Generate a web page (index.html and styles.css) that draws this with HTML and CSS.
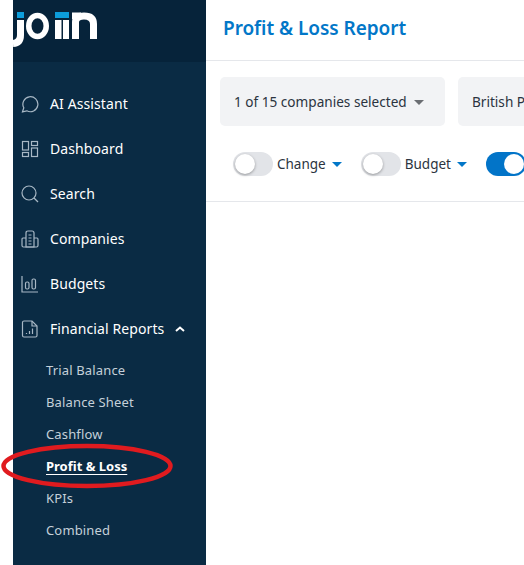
FILE: index.html
```html
<!DOCTYPE html>
<html lang="en">
<head>
    <meta charset="UTF-8">
    <meta name="viewport" content="width=device-width, initial-scale=1.0">
    <title>Profit &amp; Loss Report</title>
    <link rel="stylesheet" href="styles.css">
</head>
<body>
    <div class="side">
        <div class="logo">
            <svg class="logosvg" width="97" height="62" viewBox="0 0 97 62">
                <rect x="4" y="12" width="7" height="6" fill="#0c9ddb"/>
                <rect x="42" y="12" width="14" height="6" fill="#0c9ddb"/>
                <path d="M7.5 20V35Q7.500 43 0 43.500" fill="none" stroke="#fff" stroke-width="7"/>
                <ellipse cx="24.500" cy="26" rx="8.750" ry="10.500" fill="none" stroke="#fff" stroke-width="5.500"/>
                <rect x="42" y="20" width="6.500" height="19" fill="#fff"/>
                <rect x="50" y="20" width="6" height="19" fill="#fff"/>
                <path d="M62.500 39V22Q62.500 16 71 16Q80.500 16 80.500 24V39" fill="none" stroke="#fff" stroke-width="7"/>
                <path d="M59 12.500H68V19H59Z" fill="#fff"/>
            </svg>
        </div>
        <ul class="nav">
            <li class="navitem">
                <svg class="icon" viewBox="0 0 18 18"><path d="M1.500 16.800L2.800 12.800A7.500 7.500 0 1 1 5.800 15.800Z"/></svg>
                <span>AI Assistant</span>
            </li>
            <li class="navitem">
                <svg class="icon" viewBox="0 0 18 18"><rect x="1.500" y="1.500" width="6" height="8.500"/><rect x="10.500" y="1.500" width="6" height="4"/><rect x="1.500" y="12.500" width="6" height="4"/><rect x="10.500" y="8" width="6" height="8.500"/></svg>
                <span>Dashboard</span>
            </li>
            <li class="navitem">
                <svg class="icon" viewBox="0 0 18 18"><circle cx="8" cy="8" r="7"/><path d="M13 13L17 17"/></svg>
                <span>Search</span>
            </li>
            <li class="navitem">
                <svg class="icon" viewBox="0 0 18 18"><path d="M5 17V3Q5 1 7 1H11Q13 1 13 3V17Z"/><path d="M5 8H2Q1 8 1 9.500V15.500Q1 17 2.500 17H15.500Q17 17 17 15.500V9.500Q17 8 16 8H13"/><path d="M7.500 5H10.500M7.500 8H10.500M7.500 11H10.500M7.500 14H10.500"/></svg>
                <span>Companies</span>
            </li>
            <li class="navitem">
                <svg class="icon" viewBox="0 0 18 18"><path d="M1 1V17H17"/><rect x="4.500" y="7" width="3.500" height="7" rx="1.500"/><rect x="11" y="4" width="3.500" height="10" rx="1.500"/></svg>
                <span>Budgets</span>
            </li>
            <li class="navitem">
                <svg class="icon" viewBox="0 0 18 18"><path d="M3 1H11L16 6V15.500Q16 17 14.500 17H3Q1.500 17 1.500 15.500V2.500Q1.500 1 3 1Z"/><path d="M11 1V6H16"/><path d="M5.500 14V13M8.500 14V11M11.500 14V8.500"/></svg>
                <span>Financial Reports</span>
                <svg class="chev" width="10" height="6" viewBox="0 0 10 6"><path d="M1 5L5 1.500L9 5"/></svg>
            </li>
        </ul>
        <ul class="subnav">
            <li>Trial Balance</li>
            <li>Balance Sheet</li>
            <li>Cashflow</li>
            <li class="current">Profit &amp; Loss</li>
            <li>KPIs</li>
            <li>Combined</li>
        </ul>
    </div>

    <div class="main">
        <div class="head">
            <h1>Profit &amp; Loss Report</h1>
        </div>
        <div class="filters">
            <div class="selects">
                <div class="select first">1 of 15 companies selected <span class="arrow grey"></span></div>
                <div class="select second">British Pound</div>
            </div>
            <div class="toggles">
                <div class="tog"></div>
                <span class="toglabel">Change</span>
                <span class="arrow blue"></span>
                <div class="tog"></div>
                <span class="toglabel">Budget</span>
                <span class="arrow blue"></span>
                <div class="tog on"></div>
            </div>
        </div>
    </div>

    <!-- red marker somebody drew on the screenshot -->
    <svg class="marker" width="176" height="50" viewBox="0 0 176 50">
        <ellipse cx="87" cy="25" rx="83.500" ry="20" fill="none" stroke="#e01b1f" stroke-width="4.500"/>
    </svg>
</body>
</html>
```
FILE: styles.css
```css
html, body{
    height: 100%;
}
body{
    margin: 0;
    display: flex;
    overflow: hidden;
    background-color: white;
    font-family: 'Noto Sans', sans-serif;
    position: relative;
}

.side{
    flex: none;
    width: 193px;
    margin-left: 13px;
    background-color: #0a2b44;
    color: white;
}
.logo{
    height: 62px;
    background-color: #06233a;
}
.logosvg{
    display: block;
    overflow: visible;
}

.nav, .subnav{
    list-style: none;
    margin: 0;
    padding: 0;
}
.nav{
    padding-top: 19px;
}
.navitem{
    height: 45px;
    display: flex;
    align-items: center;
    padding-left: 8px;
    font-size: 14px;
    letter-spacing: 0.1px;
}
.icon{
    width: 18px;
    height: 18px;
    margin-right: 11px;
    fill: none;
    stroke: #a8b8c5;
    stroke-width: 1.2;
}
.chev{
    margin-left: 11px;
    fill: none;
    stroke: white;
    stroke-width: 2;
}

.subnav{
    padding-top: 3px;
}
.subnav li{
    height: 32px;
    line-height: 32px;
    padding-left: 33px;
    font-size: 13px;
    letter-spacing: 0.15px;
    color: #c5d0d9;
}
.subnav .current{
    color: white;
    font-weight: 700;
    letter-spacing: 0;
    text-decoration: underline;
    text-underline-offset: 3px;
}

.main{
    flex: none;
    width: 600px;
}
.head{
    height: 60px;
    border-bottom: 1px solid #e5e7eb;
    padding-left: 17px;
    display: flex;
    align-items: center;
}
.head h1{
    margin: 0 0 4px;
    font-size: 19px;
    font-weight: 600;
    letter-spacing: -0.05px;
    color: #0277c8;
}

.filters{
    height: 140px;
    border-bottom: 1px solid #e5e7eb;
}
.selects{
    display: flex;
    gap: 13px;
    padding: 16px 0 0 14px;
}
.select{
    height: 49px;
    box-sizing: border-box;
    padding: 0 0 1px 14px;
    display: flex;
    align-items: center;
    gap: 7px;
    background-color: #f2f3f5;
    border-radius: 5px;
    font-size: 13.6px;
    color: #2b3440;
}
.first{
    width: 225px;
}
.second{
    width: 200px;
}

.arrow{
    display: inline-block;
    flex: none;
    width: 0;
    height: 0;
    border-left: 5px solid transparent;
    border-right: 5px solid transparent;
}
.grey{
    border-top: 5px solid #6b6e73;
    margin-top: 2px;
}
.blue{
    border-top: 5px solid #0277c8;
}

.toggles{
    display: flex;
    align-items: center;
    margin-top: 26px;
    padding-left: 27px;
    font-size: 13.5px;
    color: #2b3440;
}
.toglabel{
    margin-left: 4px;
    margin-right: 6px;
}
.blue + .tog{
    margin-left: 19px;
}
.tog{
    flex: none;
    width: 40px;
    height: 24px;
    border-radius: 12px;
    background-color: #e2e4e8;
    position: relative;
}
.tog::after{
    content: '';
    position: absolute;
    top: 2px;
    left: 2px;
    width: 20px;
    height: 20px;
    border-radius: 50%;
    background-color: white;
    box-shadow: 0 1px 3px rgba(0, 0, 0, 0.35);
}
.tog.on{
    background-color: #0274c8;
}
.tog.on::after{
    left: 18px;
    box-shadow: none;
}

.marker{
    position: absolute;
    left: 0;
    top: 441px;
}
```
